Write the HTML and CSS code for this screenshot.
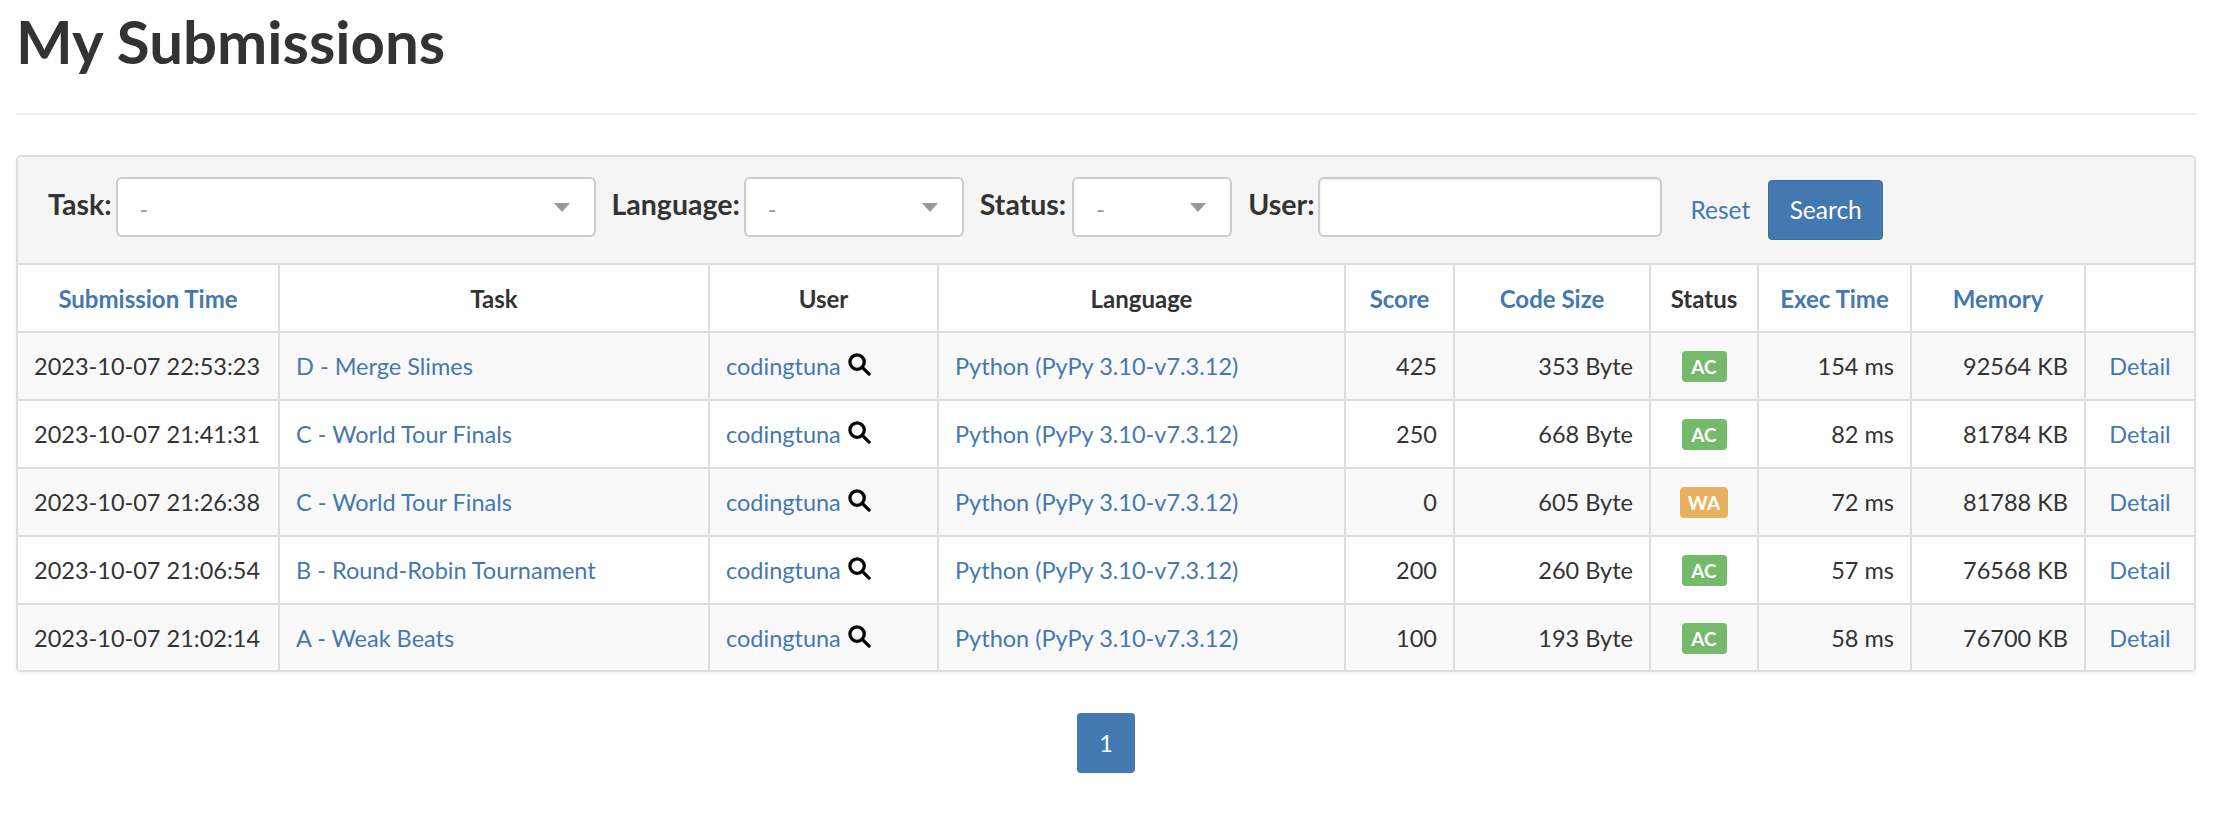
FILE: index.html
```html
<!DOCTYPE html>
<html lang="en">
<head>
    <meta charset="UTF-8">
    <title>My Submissions</title>
    <link rel="stylesheet" href="styles.css">
</head>
<body>

    <h1>My Submissions</h1>
    <hr>

    <div class="panel">
        <div class="filter">
            <label>Task:</label>
            <div class="select select-task"><span>-</span><i class="caret"></i></div>
            <label>Language:</label>
            <div class="select select-lang"><span>-</span><i class="caret"></i></div>
            <label class="label-status">Status:</label>
            <div class="select select-status"><span>-</span><i class="caret"></i></div>
            <label>User:</label>
            <input type="text" class="user-input">
            <a href="#" class="reset">Reset</a>
            <button class="btn">Search</button>
        </div>
        <table>
            <colgroup>
                <col class="col-time"><col class="col-task"><col class="col-user"><col class="col-lang"><col class="col-score">
                <col class="col-size"><col class="col-status"><col class="col-exec"><col class="col-mem"><col class="col-detail">
            </colgroup>
            <thead>
                <tr>
                    <th><a href="#">Submission Time</a></th>
                    <th>Task</th>
                    <th>User</th>
                    <th>Language</th>
                    <th><a href="#">Score</a></th>
                    <th><a href="#">Code Size</a></th>
                    <th>Status</th>
                    <th><a href="#">Exec Time</a></th>
                    <th><a href="#">Memory</a></th>
                    <th></th>
                </tr>
            </thead>
            <tbody>
                <tr>
                    <td>2023-10-07 22:53:23</td>
                    <td><a href="#">D - Merge Slimes</a></td>
                    <td><a href="#">codingtuna</a> <svg class="search-icon" viewBox="0 0 24 24"><circle cx="9.5" cy="9.5" r="7.5"/><line x1="15" y1="15" x2="22" y2="22"/></svg></td>
                    <td><a href="#">Python (PyPy 3.10-v7.3.12)</a></td>
                    <td class="right">425</td>
                    <td class="right">353 Byte</td>
                    <td class="center"><span class="badge ac">AC</span></td>
                    <td class="right">154 ms</td>
                    <td class="right">92564 KB</td>
                    <td class="center"><a href="#">Detail</a></td>
                </tr>
                <tr>
                    <td>2023-10-07 21:41:31</td>
                    <td><a href="#">C - World Tour Finals</a></td>
                    <td><a href="#">codingtuna</a> <svg class="search-icon" viewBox="0 0 24 24"><circle cx="9.5" cy="9.5" r="7.5"/><line x1="15" y1="15" x2="22" y2="22"/></svg></td>
                    <td><a href="#">Python (PyPy 3.10-v7.3.12)</a></td>
                    <td class="right">250</td>
                    <td class="right">668 Byte</td>
                    <td class="center"><span class="badge ac">AC</span></td>
                    <td class="right">82 ms</td>
                    <td class="right">81784 KB</td>
                    <td class="center"><a href="#">Detail</a></td>
                </tr>
                <tr>
                    <td>2023-10-07 21:26:38</td>
                    <td><a href="#">C - World Tour Finals</a></td>
                    <td><a href="#">codingtuna</a> <svg class="search-icon" viewBox="0 0 24 24"><circle cx="9.5" cy="9.5" r="7.5"/><line x1="15" y1="15" x2="22" y2="22"/></svg></td>
                    <td><a href="#">Python (PyPy 3.10-v7.3.12)</a></td>
                    <td class="right">0</td>
                    <td class="right">605 Byte</td>
                    <td class="center"><span class="badge wa">WA</span></td>
                    <td class="right">72 ms</td>
                    <td class="right">81788 KB</td>
                    <td class="center"><a href="#">Detail</a></td>
                </tr>
                <tr>
                    <td>2023-10-07 21:06:54</td>
                    <td><a href="#">B - Round-Robin Tournament</a></td>
                    <td><a href="#">codingtuna</a> <svg class="search-icon" viewBox="0 0 24 24"><circle cx="9.5" cy="9.5" r="7.5"/><line x1="15" y1="15" x2="22" y2="22"/></svg></td>
                    <td><a href="#">Python (PyPy 3.10-v7.3.12)</a></td>
                    <td class="right">200</td>
                    <td class="right">260 Byte</td>
                    <td class="center"><span class="badge ac">AC</span></td>
                    <td class="right">57 ms</td>
                    <td class="right">76568 KB</td>
                    <td class="center"><a href="#">Detail</a></td>
                </tr>
                <tr>
                    <td>2023-10-07 21:02:14</td>
                    <td><a href="#">A - Weak Beats</a></td>
                    <td><a href="#">codingtuna</a> <svg class="search-icon" viewBox="0 0 24 24"><circle cx="9.5" cy="9.5" r="7.5"/><line x1="15" y1="15" x2="22" y2="22"/></svg></td>
                    <td><a href="#">Python (PyPy 3.10-v7.3.12)</a></td>
                    <td class="right">100</td>
                    <td class="right">193 Byte</td>
                    <td class="center"><span class="badge ac">AC</span></td>
                    <td class="right">58 ms</td>
                    <td class="right">76700 KB</td>
                    <td class="center"><a href="#">Detail</a></td>
                </tr>
            </tbody>
        </table>
    </div>

    <div class="pager">
        <a href="#" class="page-current">1</a>
    </div>

</body>
</html>
```

FILE: styles.css
```css
body {
    font-family: Lato, 'Open Sans', sans-serif;
    font-size: 23.5px;
    color: #333;
    background-color: #fff;
    margin: 0;
    padding: 0 20px 0 16px;
    overflow: hidden;
}
a {
    color: #4478b1;
    text-decoration: none;
}
h1 {
    font-size: 60px;
    font-weight: 700;
    line-height: 64px;
    margin: 0;
    padding-top: 9px;
    height: 103px;
    box-sizing: border-box;
}
hr {
    border: 0;
    border-top: 2px solid #eee;
    margin: 10px 0 40px;
}

/* filter bar */
.panel {
    border: 2px solid #ddd;
    border-radius: 5px;
    box-shadow: 0 2px 3px rgba(0,0,0,0.05);
}
.filter {
    display: flex;
    align-items: center;
    height: 108px;
    box-sizing: border-box;
    padding: 0 0 0 30px;
    background-color: #f5f5f5;
    border-bottom: 2px solid #ddd;
    border-radius: 4px 4px 0 0;
}
.filter label {
    font-size: 28.5px;
    font-weight: 700;
    margin: -13px 4px 0 0;
}
.filter .label-status {
    margin-right: 6px;
}
.select {
    display: flex;
    align-items: center;
    justify-content: space-between;
    height: 60px;
    box-sizing: border-box;
    padding: 4px 24px 0 22px;
    background: #fff;
    border: 2px solid #ccc;
    border-radius: 6px;
    margin: -6px 16px 0 0;
    color: #999;
}
.select-task { width: 480px; }
.select-lang { width: 220px; }
.select-status { width: 160px; }
.caret {
    width: 0;
    height: 0;
    border-left: 8px solid transparent;
    border-right: 8px solid transparent;
    border-top: 9px solid #999;
    margin-top: -4px;
}
.user-input {
    width: 344px;
    height: 60px;
    box-sizing: border-box;
    border: 2px solid #ccc;
    border-radius: 6px;
    margin: -6px 28px 0 0;
    box-shadow: inset 0 1px 2px rgba(0,0,0,0.1);
}
.reset {
    font-size: 24.5px;
    margin: -2px 18px 0 0;
}
.btn {
    width: 115px;
    height: 60px;
    padding: 0 0 2px;
    font-family: inherit;
    font-size: 24.5px;
    color: #fff;
    background-color: #4478b1;
    border: 1px solid #3c6ca1;
    border-radius: 4px;
}

/* tabel */
table {
    width: 100%;
    table-layout: fixed;
    border-collapse: collapse;
}
th, td {
    height: 68px;
    box-sizing: border-box;
    padding: 0 16px;
    border: 2px solid #ddd;
    white-space: nowrap;
}
th:first-child, td:first-child { border-left: 0; }
th:last-child, td:last-child { border-right: 0; }
thead th { border-top: 0; text-align: center; font-weight: 700; font-size: 24px; height: 67px; }
tbody tr:last-child td { border-bottom: 0; height: 66px; }
tbody tr:nth-child(odd) { background-color: #f9f9f9; }
.right { text-align: right; }
.center { text-align: center; }
.col-time { width: 261px; }
.col-task { width: 430px; }
.col-user { width: 229px; }
.col-lang { width: 407px; }
.col-score { width: 109px; }
.col-size { width: 196px; }
.col-status { width: 108px; }
.col-exec { width: 153px; }
.col-mem { width: 174px; }

.search-icon {
    width: 23px;
    height: 23px;
    margin-left: 1px;
    fill: none;
    stroke: #000;
    stroke-width: 3.4;
    stroke-linecap: round;
    vertical-align: -1px;
}
.badge {
    display: inline-block;
    min-width: 45px;
    box-sizing: border-box;
    padding: 0 8px;
    font-size: 19px;
    font-weight: 700;
    line-height: 31px;
    color: #fff;
    border-radius: 4px;
    vertical-align: middle;
}
.ac { background-color: #75b96b; }
.wa { background-color: #e8b05f; }

.pager {
    display: flex;
    justify-content: center;
    margin-top: 41px;
}
.page-current {
    width: 58px;
    height: 60px;
    line-height: 60px;
    text-align: center;
    color: #fff;
    background-color: #4478b1;
    border-radius: 4px;
}
```
